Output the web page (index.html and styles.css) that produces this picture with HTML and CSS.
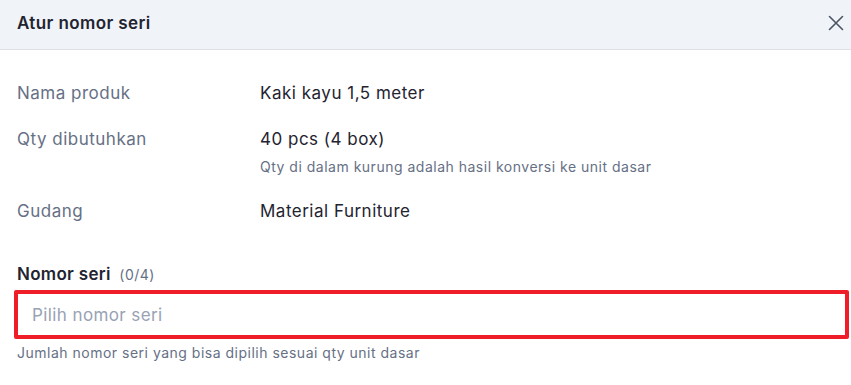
FILE: index.html
```html
<!DOCTYPE html>
<html lang="id">
<head>
  <meta charset="UTF-8">
  <meta name="viewport" content="width=device-width, initial-scale=1.0">
  <title>Atur nomor seri</title>
  <link rel="stylesheet" href="styles.css">
</head>
<body>
  <div class="modal">
    <div class="modal-header">
      <h1>Atur nomor seri</h1>
      <button class="close-btn" aria-label="Tutup">
        <svg width="16" height="16" viewBox="0 0 16 16" fill="none">
          <path d="M1.5 1.5l13 13M14.5 1.5l-13 13" stroke="#4b5563" stroke-width="1.6" stroke-linecap="round"/>
        </svg>
      </button>
    </div>

    <div class="modal-body">
      <div class="info">
        <div class="info-row">
          <span class="label">Nama produk</span>
          <div class="value">Kaki kayu 1,5 meter</div>
        </div>
        <div class="info-row">
          <span class="label">Qty dibutuhkan</span>
          <div class="value">
            40 pcs (4 box)
            <p class="hint">Qty di dalam kurung adalah hasil konversi ke unit dasar</p>
          </div>
        </div>
        <div class="info-row">
          <span class="label">Gudang</span>
          <div class="value">Material Furniture</div>
        </div>
      </div>

      <div class="field">
        <label class="field-label" for="serial">Nomor seri <span class="count">(0/4)</span></label>
        <input id="serial" class="field-input" type="text" placeholder="Pilih nomor seri">
        <p class="helper">Jumlah nomor seri yang bisa dipilih sesuai qty unit dasar</p>
      </div>
    </div>
  </div>
</body>
</html>
```

FILE: styles.css
```css
body {
  margin: 0;
  font-family: Inter, "Noto Sans", sans-serif;
  background: #fff;
  color: #1f2937;
}
.modal {
  width: 851px;
  height: 385px;
  overflow: hidden;
}
.modal-header {
  display: flex;
  align-items: center;
  justify-content: space-between;
  height: 50px;
  padding: 0 7px 4px 17px;
  background: #f0f3f8;
  border-bottom: 1px solid #dde1e7;
  box-sizing: border-box;
}
.modal-header h1 {
  margin: 0;
  font-size: 17px;
  font-weight: 600;
  letter-spacing: 0.4px;
  color: #1f2430;
}
.close-btn {
  background: none;
  border: none;
  padding: 0;
  width: 16px;
  height: 16px;
  cursor: pointer;
  display: flex;
}
.modal-body {
  padding: 31px 2px 0 14px;
}
.info {
  display: flex;
  flex-direction: column;
  gap: 22px;
  padding-left: 3px;
}
.info-row {
  display: grid;
  grid-template-columns: 243px 1fr;
  font-size: 17px;
  line-height: 24px;
  letter-spacing: 0.5px;
}
.label {
  color: #667085;
}
.value {
  color: #1f2430;
}
.hint {
  margin: 6px 0 0;
  font-size: 14px;
  line-height: 20px;
  letter-spacing: 0.5px;
  color: #667085;
}
.field {
  margin-top: 39px;
}
.field-label {
  display: block;
  padding-left: 3px;
  font-size: 17px;
  line-height: 24px;
  font-weight: 600;
  letter-spacing: 0.3px;
  color: #1f2430;
  margin-bottom: 3px;
}
.count {
  margin-left: 4px;
  font-size: 14px;
  font-weight: 400;
  letter-spacing: 0.5px;
  color: #667085;
}
.field-input {
  display: block;
  width: 100%;
  height: 49px;
  box-sizing: border-box;
  border: 4px solid #ee1d28;
  border-radius: 2px;
  padding: 0 14px;
  font-family: inherit;
  font-size: 17px;
  letter-spacing: 0.4px;
  color: #1f2430;
  outline: none;
}
.field-input::placeholder {
  color: #98a2b3;
}
.helper {
  margin: 4px 0 0;
  padding-left: 3px;
  font-size: 14px;
  line-height: 20px;
  letter-spacing: 0.5px;
  color: #667085;
}
```
